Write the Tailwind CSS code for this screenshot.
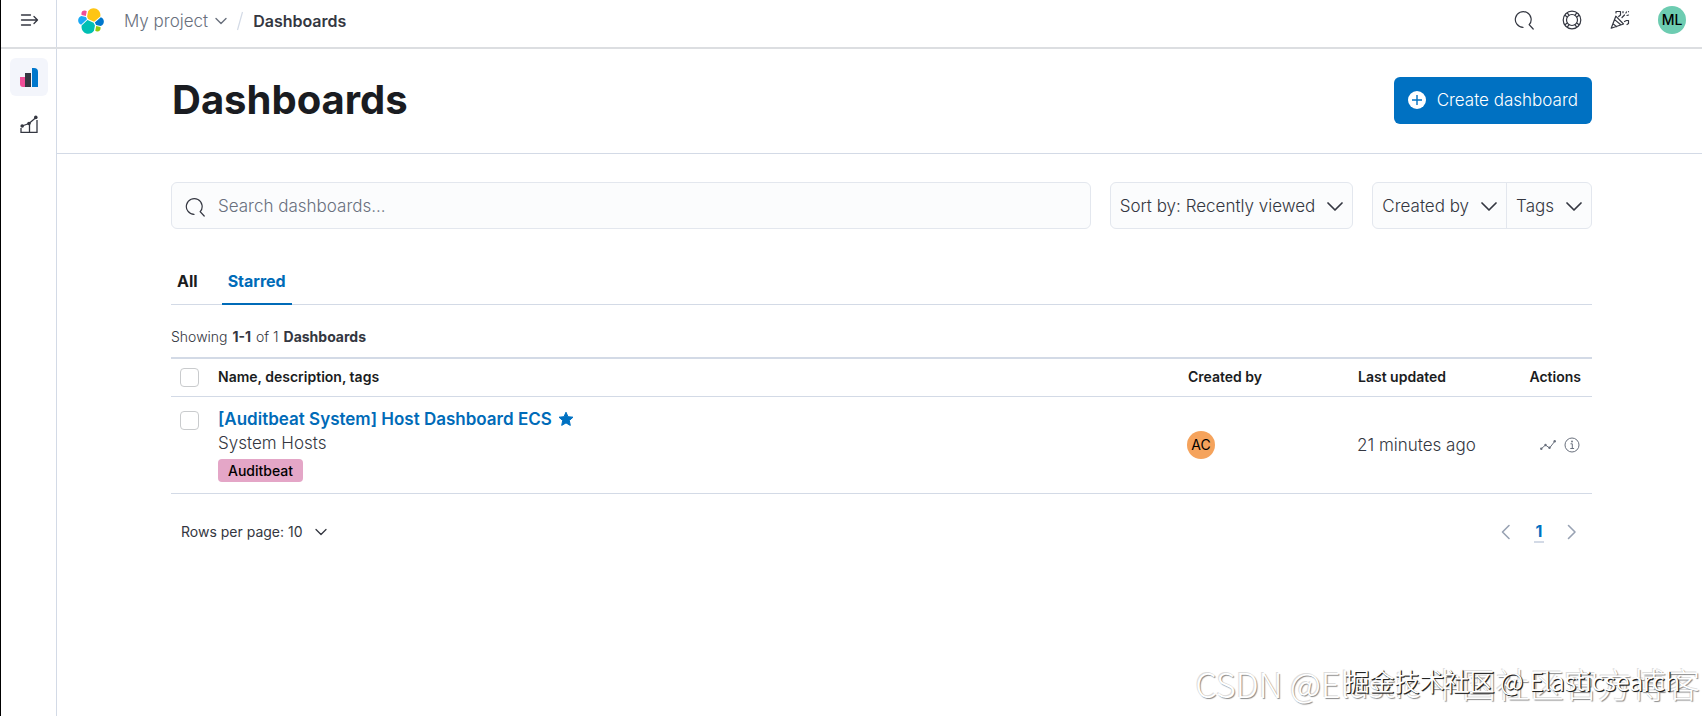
<!DOCTYPE html>
<html lang="en">
<head>
    <meta charset="UTF-8">
    <meta name="viewport" content="width=device-width, initial-scale=1.0">
    <title>Dashboards</title>
    <script src="https://cdn.jsdelivr.net/npm/@tailwindcss/browser@4"></script>
</head>
<body class="relative min-h-screen flex flex-col overflow-x-hidden bg-white border-l border-black font-['Inter','Noto_Sans_CJK_SC',sans-serif] font-[350] text-[#343741]">
    <!-- top bar -->
    <header class="h-[49px] flex border-b-2 border-[#dcdee1]">
        <div class="w-14 flex justify-center items-center pb-2 border-r border-[#d3dae6]">
            <button type="button" aria-label="Expand navigation">
                <svg class="block size-5" viewBox="0 0 20 20" fill="none" stroke="#343741" stroke-width="1.3" stroke-linecap="round" stroke-linejoin="round">
                    <path d="M2.500 5h9M2.500 10h16M2.500 15h9M15 6.500l3.500 3.500-3.500 3.500"/>
                </svg>
            </button>
        </div>
        <div class="flex-1 flex items-center justify-between pl-5 pr-4 pb-[7px]">
            <nav class="pt-0.5 flex items-center text-[17px] leading-6" aria-label="Breadcrumbs">
                <a href="#" aria-label="Elastic home">
                    <svg class="block size-7" viewBox="0 0 32 32">
                        <path fill="#fec514" d="M12.580 13.787l7.002 3.211 7.066-6.213a7.850 7.850 0 0 0 .152-1.557c0-4.287-3.470-7.775-7.736-7.775a7.720 7.720 0 0 0-6.386 3.388l-1.175 6.118 1.077 2.828z"/>
                        <path fill="#00bfb3" d="M5.333 21.214a7.990 7.990 0 0 0-.149 1.576c0 4.300 3.484 7.798 7.766 7.798a7.750 7.750 0 0 0 6.416-3.409l1.166-6.102-1.556-2.988-7.030-3.215-6.613 6.340z"/>
                        <path fill="#f04e98" d="M5.288 9.067l4.800 1.137 1.050-5.475a3.790 3.790 0 0 0-2.302-.777 3.822 3.822 0 0 0-3.810 3.826c0 .445.088.880.262 1.289z"/>
                        <path fill="#1ba9f5" d="M4.872 10.214A5.320 5.320 0 0 0 1.316 15.250a5.330 5.330 0 0 0 3.410 4.985l6.733-6.115-1.236-2.656-5.350-1.250z"/>
                        <path fill="#93c90e" d="M20.874 27.179a3.770 3.770 0 0 0 2.292.784 3.819 3.819 0 0 0 3.807-3.823c0-.458-.081-.901-.240-1.315l-4.797-1.127-1.062 5.481z"/>
                        <path fill="#0077cc" d="M21.850 20.460l5.282 1.239a5.324 5.324 0 0 0 3.556-5.038 5.327 5.327 0 0 0-3.404-4.979l-6.908 6.069 1.474 2.709z"/>
                    </svg>
                </a>
                <button type="button" class="ml-[19px] flex items-center gap-[7px] text-[#69707d]">
                    My project
                    <svg class="block w-3 h-2" viewBox="0 0 12 8" fill="none" stroke="#69707d" stroke-width="1.4" stroke-linecap="round" stroke-linejoin="round"><path d="M1 1.500l5 5 5-5"/></svg>
                </button>
                <svg class="mx-[9px] block w-2 h-5" viewBox="0 0 8 20" stroke="#d3dae6" stroke-width="1.2" aria-hidden="true"><path d="M6.500 1l-5 18"/></svg>
                <span class="text-base font-semibold" aria-current="page">Dashboards</span>
            </nav>
            <div class="flex items-center gap-7">
                <button type="button" aria-label="Search">
                    <svg class="block size-5" viewBox="0 0 20 20" fill="none" stroke="#343741" stroke-width="1.200" stroke-linecap="round"><path d="M9 17.400A7.900 7.900 0 1 1 15.200 14.700l4 4.300"/></svg>
                </button>
                <button type="button" aria-label="Help">
                    <svg class="block size-5" viewBox="0 0 20 20" fill="none" stroke="#343741" stroke-width="1.200">
                        <circle cx="10" cy="10" r="8.800"/><circle cx="10" cy="10" r="5.500"/>
                        <path d="M5.300 2.900l1.900 2.700M2.900 5.300l2.700 1.900M14.700 2.900l-1.900 2.700M17.100 5.300l-2.700 1.900M5.300 17.100l1.900-2.700M2.900 14.700l2.700-1.900M14.700 17.100l-1.900-2.700M17.100 14.700l-2.700-1.900"/>
                    </svg>
                </button>
                <button type="button" aria-label="News">
                    <svg class="block size-5" viewBox="0 0 20 20" fill="none" stroke="#343741" stroke-width="1.200" stroke-linecap="round" stroke-linejoin="round">
                        <path d="M5.800 6.200L1.200 18.200l12.300-4.200zM4.600 9.600l6.200 5.200M3 13.800l3.600 2.800M6 3V1.500h4.500V5l-1.800 1.500M14.500 11.500l2-1h2v3l-1.500 1"/>
                        <path d="M12 7.500l2.500-2.500M13 1.500v1.200M16.500 2l-.6 1M18.500 1.500v.200M18.500 5l-1.500.500"/>
                    </svg>
                </button>
                <button type="button" class="size-7 rounded-full bg-[#6dccb1] text-sm font-medium text-black" aria-label="Account menu">ML</button>
            </div>
        </div>
    </header>

    <div class="flex-1 flex">
        <!-- side navigation -->
        <nav class="w-14 pt-[9px] flex flex-col items-center gap-[9px] border-r border-[#d3dae6]" aria-label="Main">
            <a href="#" class="size-[38px] rounded-md bg-[#f3f5fb] flex items-center justify-center" aria-label="Analytics">
                <svg class="block size-5" viewBox="0 0 20 20">
                    <path fill="#f04e98" d="M1 10h5v10H4a3 3 0 0 1-3-3z"/>
                    <path fill="#343741" d="M6 6h6v14H6z"/>
                    <path fill="#0077cc" d="M13 1h2a4 4 0 0 1 4 4v15h-6z"/>
                </svg>
            </a>
            <a href="#" class="size-[38px] flex items-center justify-center" aria-label="Visualizations">
                <svg class="block size-5" viewBox="0 0 20 20" fill="none" stroke="#343741" stroke-width="1.300">
                    <path d="M3 12l7-2.500 7-6M2 14v4.300h16V6M10.500 11v7"/>
                    <g fill="#343741" stroke="none"><circle cx="3.200" cy="12" r="1.800"/><circle cx="10" cy="9.500" r="1.800"/><circle cx="16.800" cy="3.400" r="1.800"/></g>
                </svg>
            </a>
        </nav>

        <main class="flex-1 min-w-0">
            <div class="h-[105px] pl-[115px] pr-[110px] pb-0.5 flex items-center justify-between border-b border-[#d3dae6]">
                <h1 class="text-[40px] leading-12 font-bold text-[#1a1c21]">Dashboards</h1>
                <button type="button" class="h-[47px] px-[14px] flex items-center gap-[11px] rounded-md bg-[#0071c2] text-[17px] text-white">
                    <svg class="block size-[18px]" viewBox="0 0 18 18"><circle cx="9" cy="9" r="9" fill="#fff"/><path d="M9 4v10M4 9h10" stroke="#0071c2" stroke-width="1.400"/></svg>
                    <span class="pt-0.5">Create dashboard</span>
                </button>
            </div>

            <div class="pl-[114px] pr-[110px] pt-7">
                <!-- search and filters -->
                <div class="flex gap-[19px] text-[17px]">
                    <label class="flex-1 h-[47px] pt-0.5 flex items-center gap-[13px] pl-[13px] rounded-md border border-[#e3e7ee] bg-[#fbfcfd]">
                        <svg class="block size-5 shrink-0" viewBox="0 0 20 20" fill="none" stroke="#343741" stroke-width="1.200" stroke-linecap="round"><path d="M9 17.400A7.900 7.900 0 1 1 15.200 14.700l4 4.300"/></svg>
                        <input type="search" aria-label="Search dashboards" placeholder="Search dashboards..." class="flex-1 min-w-0 bg-transparent outline-none placeholder:text-[#69707d]">
                    </label>
                    <button type="button" class="h-[47px] pt-0.5 px-[9px] flex items-center gap-3 rounded-md border border-[#e3e7ee] bg-[#fbfcfd]">
                        Sort by: Recently viewed
                        <svg class="block w-4 h-2.5" viewBox="0 0 16 10" fill="none" stroke="#343741" stroke-width="1.700" stroke-linecap="round" stroke-linejoin="round"><path d="M1 1l7 7 7-7"/></svg>
                    </button>
                    <div class="h-[47px] flex rounded-md border border-[#e3e7ee] bg-[#fbfcfd]">
                        <button type="button" class="pt-0.5 px-[9px] flex items-center gap-3 border-r border-[#e3e7ee]">
                            Created by
                            <svg class="block w-4 h-2.5" viewBox="0 0 16 10" fill="none" stroke="#343741" stroke-width="1.700" stroke-linecap="round" stroke-linejoin="round"><path d="M1 1l7 7 7-7"/></svg>
                        </button>
                        <button type="button" class="pt-0.5 px-[9px] flex items-center gap-3">
                            Tags
                            <svg class="block w-4 h-2.5" viewBox="0 0 16 10" fill="none" stroke="#343741" stroke-width="1.700" stroke-linecap="round" stroke-linejoin="round"><path d="M1 1l7 7 7-7"/></svg>
                        </button>
                    </div>
                </div>

                <!-- tabs -->
                <div class="mt-[29px] h-[47px] flex gap-[18px] border-b border-[#d3dae6] text-base font-bold" role="tablist">
                    <button type="button" role="tab" aria-selected="false" class="px-1.5 text-[#1a1c21]">All</button>
                    <button type="button" role="tab" aria-selected="true" class="-mb-px px-1.5 border-b-2 border-[#006bb8] text-[#006bb8]">Starred</button>
                </div>

                <p class="mt-[22px] text-sm leading-5">Showing <strong class="ml-px">1-1</strong> <span class="ml-px">of 1</span> <strong class="ml-px">Dashboards</strong></p>

                <table class="mt-2.5 w-full table-fixed border-t-2 border-[#d3dae6] text-left">
                    <thead class="text-sm text-[#1a1c21]">
                        <tr class="h-[38px] border-b border-[#d3dae6]">
                            <th class="w-[38px] pl-[9px]"><input type="checkbox" aria-label="Select all rows" class="block size-[19px] appearance-none rounded border border-[#c9cbcd] bg-white"></th>
                            <th class="pl-[9px] font-semibold">Name, description, tags</th>
                            <th class="w-[170px] pl-[9px] font-semibold">Created by</th>
                            <th class="w-[142px] pl-[9px] font-semibold">Last updated</th>
                            <th class="w-[101px] pr-[11px] font-semibold text-right">Actions</th>
                        </tr>
                    </thead>
                    <tbody class="text-[17px] leading-6">
                        <tr class="h-[97px] border-b border-[#d3dae6]">
                            <td class="pl-[9px] pt-[14px] align-top"><input type="checkbox" aria-label="Select [Auditbeat System] Host Dashboard ECS" class="block size-[19px] appearance-none rounded border border-[#c9cbcd] bg-white"></td>
                            <td class="pl-[9px]">
                                <div class="flex items-center gap-1.5">
                                    <a href="#" class="font-semibold text-[#006bb8]">[Auditbeat System] Host Dashboard ECS</a>
                                    <svg class="block size-4" viewBox="0 0 16 16" fill="#0071c2" stroke="#0071c2" stroke-linejoin="round"><path d="M8 1.200l2 4.500 5 .500-3.700 3.300 1 4.900L8 11.900l-4.300 2.500 1-4.900L1 6.200l5-.500z"/></svg>
                                </div>
                                <div>System Hosts</div>
                                <span class="mt-1 flex w-fit h-[23px] items-center px-2.5 rounded-sm bg-[#e4a6c7] text-sm font-medium text-black">Auditbeat</span>
                            </td>
                            <td class="pl-2"><span class="flex size-7 items-center justify-center rounded-full bg-[#f5a35c] text-sm font-normal text-black">AC</span></td>
                            <td class="pl-2 whitespace-nowrap">21 minutes ago</td>
                            <td class="pr-3">
                                <div class="flex justify-end gap-2">
                                    <button type="button" aria-label="View usage">
                                        <svg class="block size-4" viewBox="0 0 16 16" fill="none" stroke="#69707d"><path d="M1 12l4.500-4 4 3L15 4"/><g fill="#69707d" stroke="none"><circle cx="1.300" cy="11.800" r="1.200"/><circle cx="5.500" cy="8" r="1.200"/><circle cx="9.500" cy="10.800" r="1.200"/><circle cx="14.700" cy="4.200" r="1.200"/></g></svg>
                                    </button>
                                    <button type="button" aria-label="View details">
                                        <svg class="block size-4" viewBox="0 0 16 16" fill="none" stroke="#69707d"><circle cx="8" cy="8" r="7"/><path d="M6.500 6.800h1.800v4.700M6.300 11.500h3.800"/><circle cx="8" cy="4.500" r=".900" fill="#69707d" stroke="none"/></svg>
                                    </button>
                                </div>
                            </td>
                        </tr>
                    </tbody>
                </table>

                <!-- pagination -->
                <div class="mt-[26px] pl-2.5 pr-3 flex items-center justify-between">
                    <button type="button" class="flex items-center gap-3 text-sm leading-6 font-normal">
                        Rows per page: 10
                        <svg class="block w-3 h-2" viewBox="0 0 12 8" fill="none" stroke="#343741" stroke-width="1.300" stroke-linecap="round" stroke-linejoin="round"><path d="M1 1.500l5 5 5-5"/></svg>
                    </button>
                    <div class="flex items-center gap-5">
                        <button type="button" aria-label="Previous page">
                            <svg class="block size-4" viewBox="0 0 16 16" fill="none" stroke="#98a2b3" stroke-width="1.600" stroke-linecap="round" stroke-linejoin="round"><path d="M11 1.500L4.500 8l6.500 6.500"/></svg>
                        </button>
                        <a href="#" aria-current="page" class="w-2.5 border-b-2 border-[#d3dae6] text-center text-base leading-5 font-bold text-[#0071c2]">1</a>
                        <button type="button" aria-label="Next page">
                            <svg class="block size-4" viewBox="0 0 16 16" fill="none" stroke="#98a2b3" stroke-width="1.600" stroke-linecap="round" stroke-linejoin="round"><path d="M4.500 1.500L11 8l-6.500 6.500"/></svg>
                        </button>
                    </div>
                </div>
            </div>
        </main>
    </div>

    <!-- watermarks -->
    <div class="absolute right-0.5 bottom-3 font-['Noto_Sans_CJK_SC',sans-serif] text-[34px] leading-10 font-light whitespace-nowrap text-white [text-shadow:1px_1px_1px_#888,-1px_-1px_0_#ddd] pointer-events-none" lang="zh">CSDN @Elastic 中国社区官方博客</div>
    <div class="absolute right-[22px] bottom-[18px] font-['Noto_Sans_CJK_SC',sans-serif] text-[25px] leading-9 whitespace-nowrap text-white [text-shadow:1px_1px_0_#222,1px_1px_1px_#444] pointer-events-none" lang="zh">掘金技术社区 @ Elasticsearch</div>
</body>
</html>
